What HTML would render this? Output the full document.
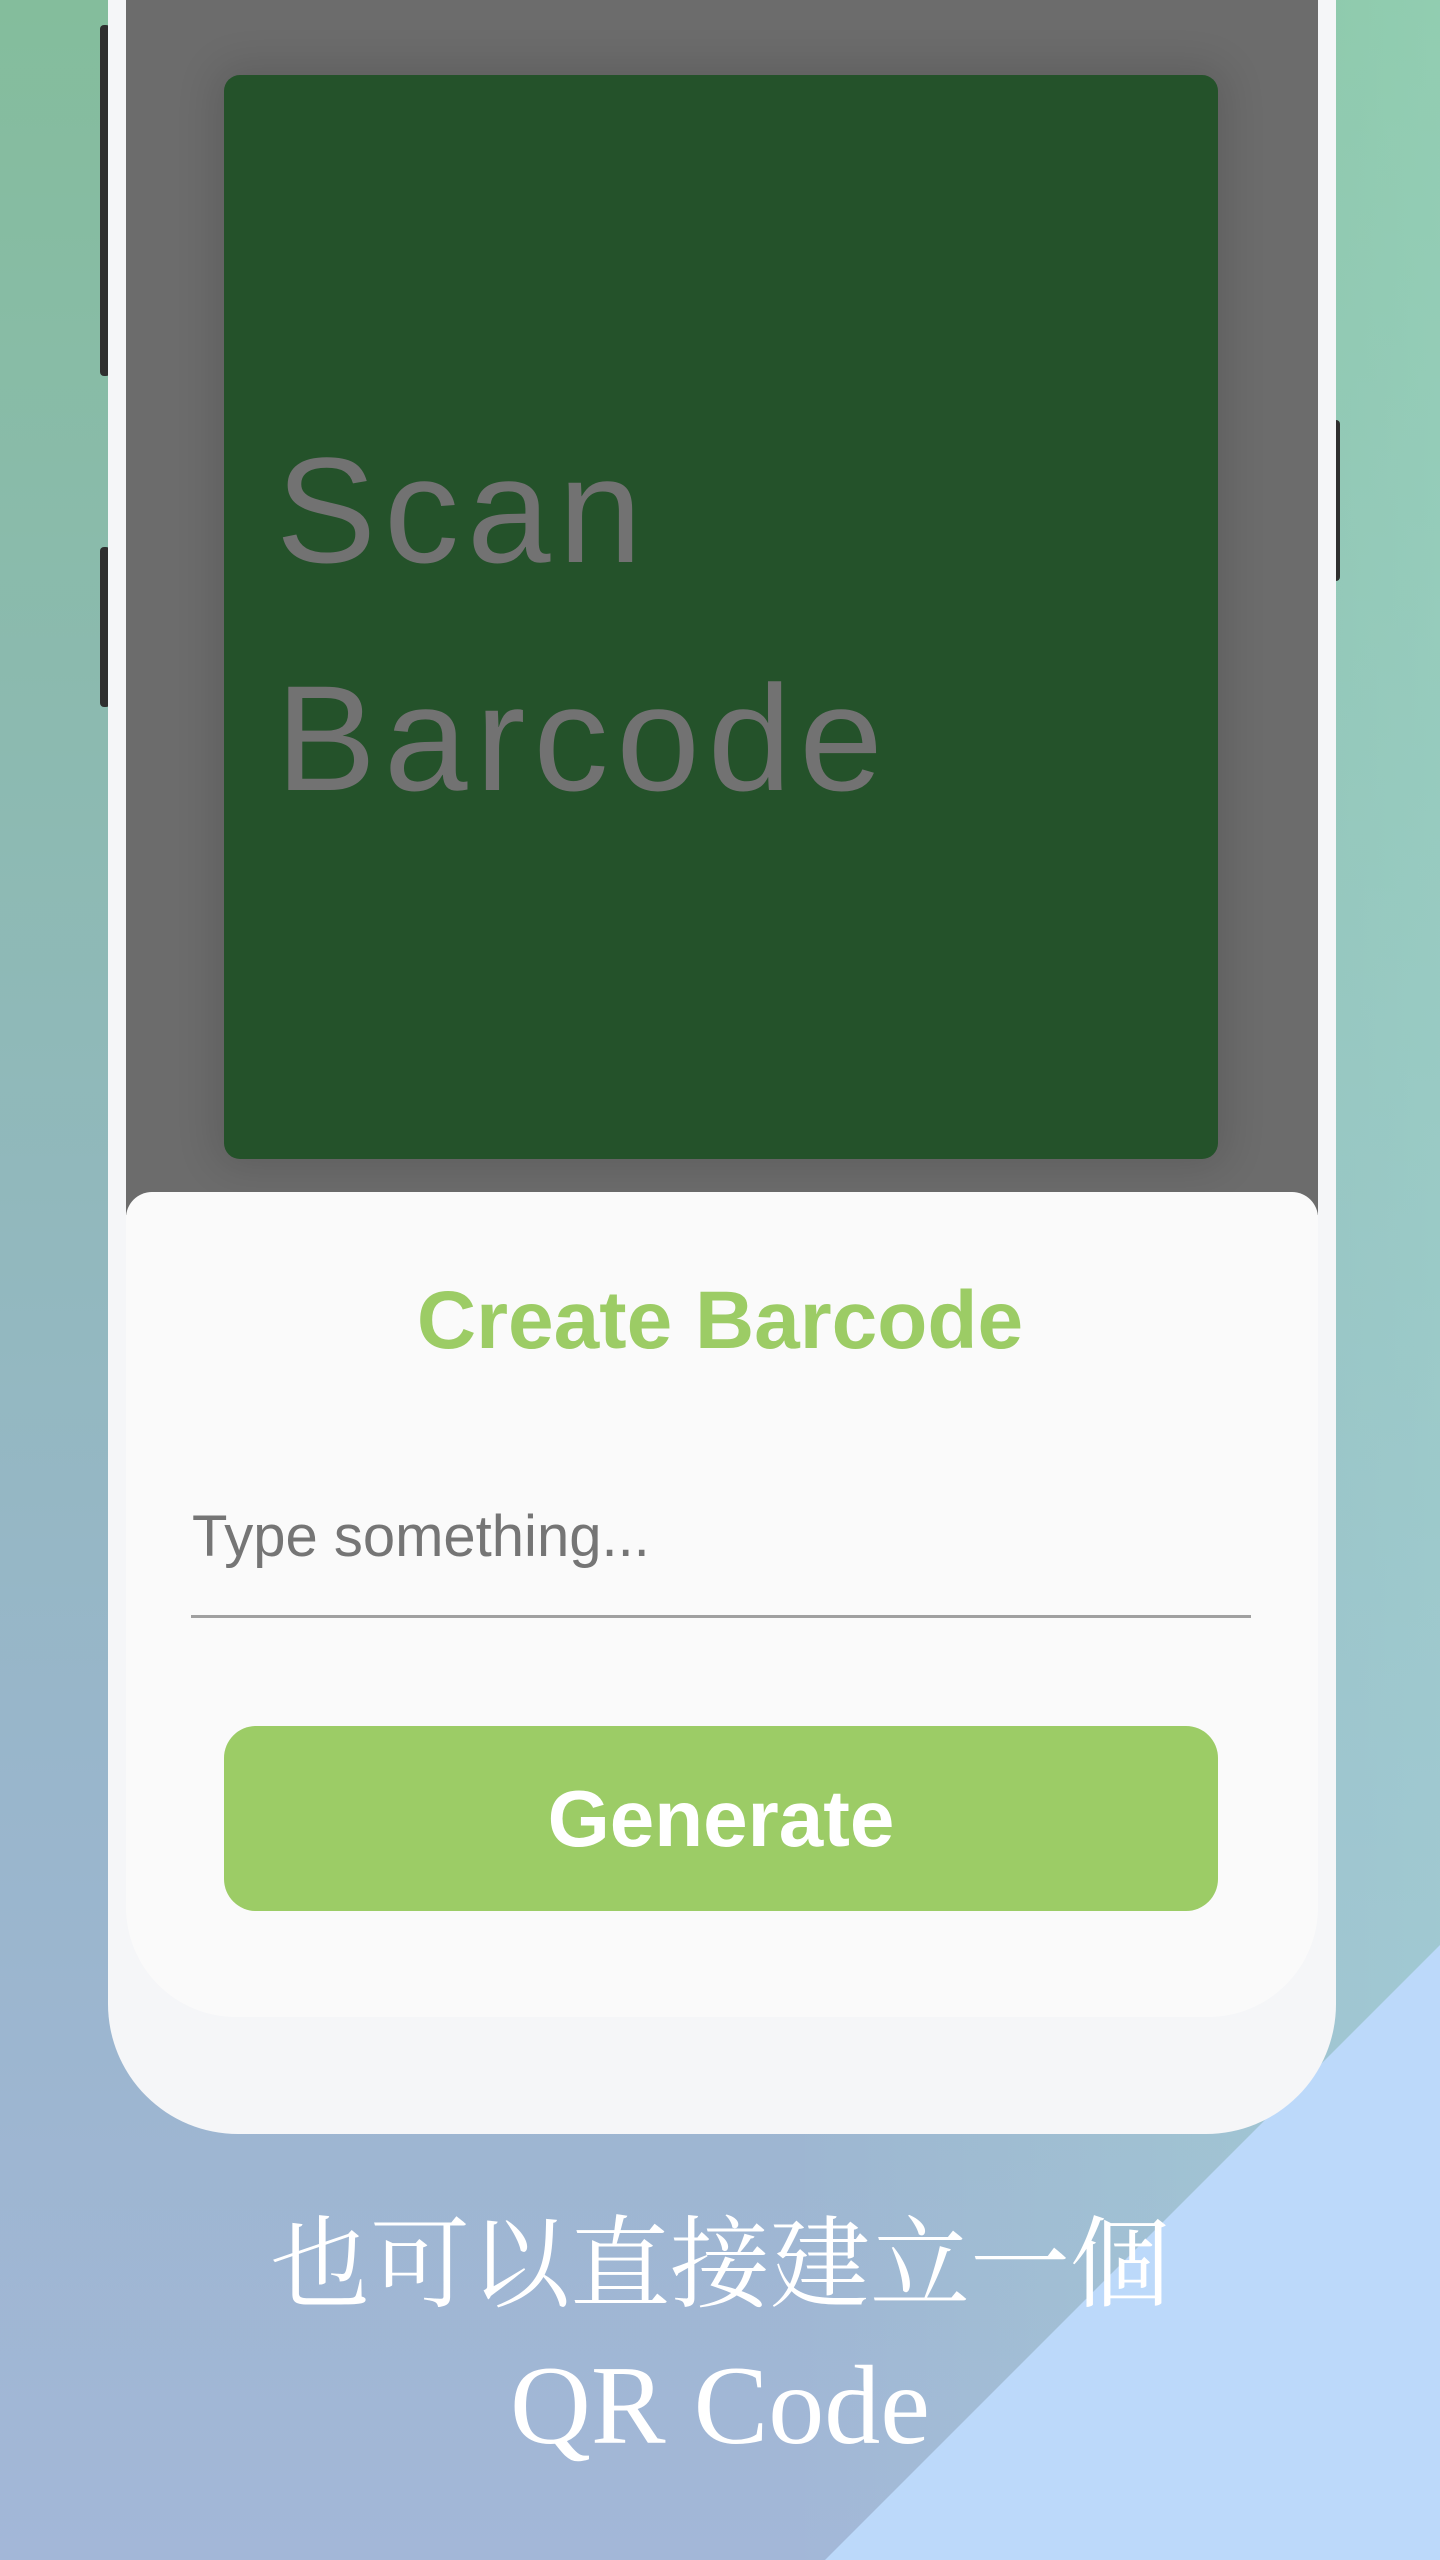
<!DOCTYPE html>
<html><head><meta charset="utf-8"><style>
html,body{margin:0;padding:0}
body{width:1440px;height:2560px;position:relative;overflow:hidden;font-family:"Liberation Sans",sans-serif;
background:linear-gradient(180deg,#84bd9c 0%,#8fb9b8 40%,#99b6cc 70%,#a3b7d8 100%);}
.bgr{position:absolute;inset:0;background:linear-gradient(90deg,rgba(0,0,0,0) 55%,rgba(170,235,215,.35) 100%)}
.tri{position:absolute;left:0;top:0;width:1440px;height:2560px}
.btnside{position:absolute;background:#2f2f2f;border-radius:4px}
.phone{position:absolute;left:108px;top:-40px;width:1228px;height:2174px;background:#f5f6f8;border-radius:0 0 130px 130px}
.screen{position:absolute;left:126px;top:0;width:1192px;height:1215px;background:#6c6c6c}
.card{position:absolute;left:224px;top:75px;width:994px;height:1084px;background:#24522a;border-radius:16px;box-shadow:0 0 40px 10px rgba(0,0,0,.12)}
.scan{position:absolute;left:276px;top:396px;color:#727272;font-size:150px;line-height:228px;font-weight:300;letter-spacing:8px}
.sheet{position:absolute;left:126px;top:1192px;width:1192px;height:825px;background:#fafafa;border-radius:26px 26px 110px 110px}
.title{position:absolute;left:0;width:1440px;top:1274px;text-align:center;color:#9ccc65;font-size:82px;font-weight:bold}
.ph{position:absolute;left:192px;top:1503px;color:#757575;font-size:58px}
.line{position:absolute;left:191px;top:1615px;width:1060px;height:3px;background:#a0a0a0}
.gen{position:absolute;left:224px;top:1726px;width:994px;height:185px;background:#9ccc66;border-radius:32px;color:#fff;font-size:80px;font-weight:bold;text-align:center;line-height:185px}
.cn{position:absolute;left:0;width:1440px;text-align:center;color:#fff;font-family:"Liberation Serif","Noto Serif CJK SC",serif;font-size:100px}
</style></head><body>
<div class="bgr"></div>
<svg class="tri" viewBox="0 0 1440 2560"><polygon points="825,2560 1440,1945 1440,2560" fill="#bcd9fa"/></svg>
<div class="btnside" style="left:100px;top:25px;width:10px;height:351px"></div>
<div class="btnside" style="left:100px;top:547px;width:10px;height:160px"></div>
<div class="btnside" style="left:1330px;top:420px;width:10px;height:161px"></div>
<div class="phone"></div>
<div class="screen"></div>
<div class="card"></div>
<div class="scan">Scan<br>Barcode</div>
<div class="sheet"></div>
<div class="title">Create Barcode</div>
<div class="ph">Type something...</div>
<div class="line"></div>
<div class="gen">Generate</div>
<div class="cn" style="top:2184px">也可以直接建立一個</div>
<div class="cn" style="top:2342px;font-size:112px">QR Code</div>
</body></html>
